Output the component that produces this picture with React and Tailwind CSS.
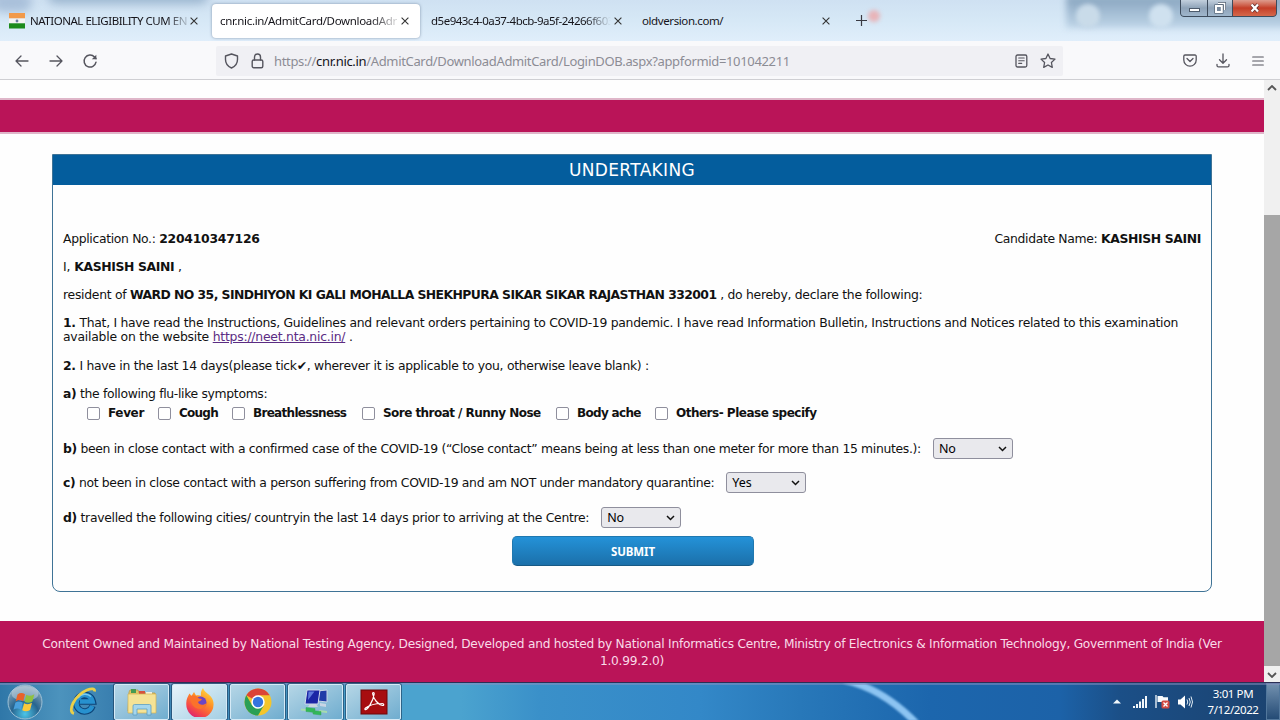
import React from "react";

function CloseX() {
  return (
    <svg width="8" height="8" viewBox="0 0 8 8" className="shrink-0">
      <path d="M.6.6l6.8 6.8M7.4.6L.6 7.4" stroke="#333" strokeWidth="1.1" />
    </svg>
  );
}

function Tab({ children, className = "", textClass = "" }) {
  return (
    <div className={"flex h-[34px] shrink-0 items-center " + className}>
      <div className={"whitespace-nowrap text-[11.5px] leading-[18px] text-[#15141a] " + textClass}>{children}</div>
      <div className="grow" />
      <CloseX />
    </div>
  );
}

function TitleBar() {
  return (
    <div className="relative flex h-[41px] shrink-0 items-center overflow-hidden bg-linear-to-b from-[#cfe1f2] via-[#d6e8f6] to-[#e0eefb]">
      <div className="absolute -top-1 -right-2 h-[32px] w-[222px] bg-linear-to-b from-[#86a2bd] via-[#a3bdd4] to-[#bfd5e8] blur-[3px]" />
      <div className="absolute top-[4px] left-[1076px] h-6 w-6 rounded-full bg-[#c9dbe9] blur-[2px]" />
      <div className="absolute top-[4px] left-[1149px] h-6 w-6 rounded-full bg-[#cfe1ef] blur-[2px]" />
      <div className="absolute top-[10px] left-[868px] h-3 w-3 rounded-full bg-[#e8b4b8] blur-[2px]" />
      <div className="absolute -top-2 -left-2 h-5 w-10 rounded-full bg-[#a9c0da] blur-[5px]" />
      <div className="absolute -top-3 left-12 h-4 w-[160px] rounded-full bg-[#9db7d0] blur-[5px]" />
      <div className="relative flex grow items-center">
        <div className="flex h-[34px] w-[212px] shrink-0 items-center pl-[9px]">
          <svg width="16" height="16" viewBox="0 0 16 16" className="shrink-0">
            <rect width="16" height="5.5" fill="#f29a4a" />
            <rect y="5.5" width="16" height="5" fill="#f4f4f4" />
            <rect y="10.3" width="16" height="5.2" fill="#1c8b1c" />
            <circle cx="8" cy="8" r="1.4" fill="#6b7ba0" />
          </svg>
          <Tab className="ml-[5px] w-[168px]" textClass="tracking-[-0.47px] [mask-image:linear-gradient(to_right,black_136px,transparent_162px)]">
            NATIONAL ELIGIBILITY CUM EN
          </Tab>
        </div>
        <Tab className="w-[208px] rounded-[4px] bg-white pr-[11px] pl-[8px] shadow-[0_0_3px_rgba(60,80,110,0.55)]" textClass="tracking-[-0.33px] [mask-image:linear-gradient(to_right,black_150px,transparent_182px)]">
          cnr.nic.in/AdmitCard/DownloadAdr
        </Tab>
        <Tab className="w-[211px] pr-[11px] pl-[11px]" textClass="tracking-[-0.5px] [mask-image:linear-gradient(to_right,black_155px,transparent_180px)]">
          d5e943c4-0a37-4bcb-9a5f-24266f603
        </Tab>
        <Tab className="w-[211px] pr-[12px] pl-[11px]" textClass="tracking-[-0.4px]">oldversion.com/</Tab>
        <svg width="11" height="11" viewBox="0 0 11 11" className="ml-[14px]">
          <path d="M5.5 0v11M0 5.5h11" stroke="#3a3a42" strokeWidth="1.2" />
        </svg>
      </div>
      <div className="absolute -top-px right-[3px] flex h-[18px] w-[97px] overflow-hidden rounded-b-[4px] border border-[#3d4b5c] bg-[#3d4b5c]">
        <div className="flex w-[26px] items-center justify-center bg-linear-to-b from-[#c3d0dd] via-[#8fa3b8] to-[#9fb6cc]">
          <div className="mt-[3px] h-[4px] w-[11px] border border-[#4d5b6c] bg-white" />
        </div>
        <div className="ml-px flex w-[24px] items-center justify-center bg-linear-to-b from-[#c3d0dd] via-[#8fa3b8] to-[#9fb6cc]">
          <svg width="12" height="12" viewBox="0 0 12 12">
            <path d="M4 1.500h6.500V8" fill="none" stroke="#4d5b6c" strokeWidth="2.800" />
            <path d="M4 1.500h6.500V8" fill="none" stroke="#fff" strokeWidth="1.500" />
            <rect x="2" y="4" width="5.800" height="6" fill="#76889c" stroke="#4d5b6c" strokeWidth="3.200" />
            <rect x="2" y="4" width="5.800" height="6" fill="#76889c" stroke="#fff" strokeWidth="2" />
          </svg>
        </div>
        <div className="ml-px flex grow items-center justify-center bg-linear-to-b from-[#dd9b8d] via-[#c43d27] to-[#d5674a]">
          <svg width="12" height="10" viewBox="0 0 12 10">
            <path d="M2.500 1.500l6.500 7M9 1.500l-6.500 7" stroke="#5b2b2b" strokeWidth="3.600" />
            <path d="M2.500 1.500l6.500 7M9 1.500l-6.500 7" stroke="#fff" strokeWidth="2.300" />
          </svg>
        </div>
      </div>
    </div>
  );
}

function Toolbar() {
  const s = { fill: "none", stroke: "#55555e", strokeWidth: 1.3, strokeLinecap: "round", strokeLinejoin: "round" };
  return (
    <div className="flex h-[39px] shrink-0 items-center border-b border-[#cfcfd3] bg-[#f9f9fb] pt-px pr-[16px] pl-[15px]">
      <svg width="14" height="12" viewBox="0 0 14 12" {...s}><path d="M13 6H1M6 1L1 6l5 5" /></svg>
      <svg className="ml-[20px]" width="14" height="12" viewBox="0 0 14 12" {...s}><path d="M1 6h12M8 1l5 5-5 5" /></svg>
      <svg className="ml-[19px]" width="16" height="16" viewBox="0 0 16 16" {...s} strokeWidth="1.500">
        <path d="M14 9.200A6 6 0 1 1 12.500 4L14 5.600" />
        <path d="M14.300 1.800v4.500H9.800z" fill="#55555e" stroke="none" />
      </svg>
      <div className="ml-[118px] flex h-[30px] w-[847px] items-center rounded-[2px] bg-[#f0f0f4] pl-[8px]">
        <svg width="15" height="16" viewBox="0 0 15 16" {...s} strokeWidth="1.400">
          <path d="M7.500 1L13.500 3v3.500c0 4-2.500 7-6 8.500-3.500-1.500-6-4.500-6-8.500V3z" />
        </svg>
        <svg className="ml-[12px]" width="13" height="16" viewBox="0 0 13 16" {...s} strokeWidth="1.400">
          <rect x="1.200" y="7" width="10.600" height="7.800" rx="1.500" />
          <path d="M3.500 7V4a3 3 0 0 1 6 0v3" />
        </svg>
        <div className="mt-[2px] ml-[10px] text-[13px] tracking-[-0.34px] whitespace-nowrap text-[#8c8c94]">
          https://<span className="text-[#15141a]">cnr.nic.in</span>/AdmitCard/DownloadAdmitCard/LoginDOB.aspx?appformid=101042211
        </div>
        <div className="grow" />
        <svg width="13" height="14" viewBox="0 0 13 14" {...s}>
          <rect x="1" y="1" width="10.800" height="12" rx="1.500" />
          <path d="M3.700 4h5.500M3.700 6.700h5.500M3.700 9.400h3" strokeWidth="1.100" />
        </svg>
        <svg className="mr-[7px] ml-[12px]" width="16" height="16" viewBox="0 0 16 16" {...s}>
          <path d="M8 1l2.100 4.500 4.900.600-3.600 3.400.900 4.900L8 12l-4.300 2.400.900-4.900L1 6.100l4.900-.600z" />
        </svg>
      </div>
      <div className="grow" />
      <svg width="14" height="13" viewBox="0 0 14 13" {...s}>
        <path d="M2 1h10a1.200 1.200 0 0 1 1.200 1.200V6a6.200 6.200 0 0 1-12.400 0V2.200A1.200 1.200 0 0 1 2 1zM4 4.500l3 3 3-3" />
      </svg>
      <svg className="ml-[19px]" width="14" height="15" viewBox="0 0 14 15" {...s}>
        <path d="M7 1v9M3.500 6.800L7 10.200l3.500-3.400M1 11.500v.900a1.500 1.500 0 0 0 1.500 1.500h9a1.500 1.500 0 0 0 1.500-1.500v-.900" />
      </svg>
      <svg className="ml-[22px]" width="12" height="10" viewBox="0 0 12 10" {...s} strokeWidth="1.200"><path d="M.7 1h10.600M.7 5h10.600M.7 9h10.600" /></svg>
    </div>
  );
}

const symptoms = [
  ["Fever", "w-[36px] tracking-[-0.35px]", "mr-[14px]"],
  ["Cough", "w-[38px] tracking-[-0.75px]", "mr-[15px]"],
  ["Breathlessness", "w-[94px] tracking-[-0.7px]", "mr-[15px]"],
  ["Sore throat / Runny Nose", "w-[158px] tracking-[-0.54px]", "mr-[15px]"],
  ["Body ache", "w-[64px] tracking-[-0.68px]", "mr-[14px]"],
  ["Others- Please specify", "w-[142px] tracking-[-0.5px]", ""],
];

function Choice({ value }) {
  return (
    <div className="flex h-[21px] w-[80px] shrink-0 items-center rounded-[3px] border border-[#8f8f9d] bg-[#e9e9ed] pr-[5px] pl-[5px] text-[12.5px] tracking-[-0.1px] text-black">
      <span className="grow font-['Noto_Sans',sans-serif]">{value}</span>
      <svg width="9" height="6" viewBox="0 0 9 6"><path d="M1 1l3.500 3.500L8 1" fill="none" stroke="#111" strokeWidth="1.500" /></svg>
    </div>
  );
}

function Card() {
  return (
    <main className="mx-[52px] mt-[20px] flex h-[438px] flex-col rounded-b-[8px] border border-[#3f7396] text-[12.4px] leading-[14px] tracking-[-0.335px] whitespace-nowrap text-[#111]">
      <h1 className="h-[30px] shrink-0 bg-[#045d9d] text-center text-[17px] leading-[31px] tracking-[0.35px] text-white">UNDERTAKING</h1>
      <div className="flex grow flex-col px-[10px] pt-[47px]">
        <div className="flex justify-between">
          <p>Application No.: <b className="tracking-[-0.25px]">220410347126</b></p>
          <p>Candidate Name: <b className="tracking-[-0.37px]">KASHISH SAINI</b></p>
        </div>
        <p className="mt-[14px] tracking-[-0.1px]">I, <b className="tracking-[-0.37px]">KASHISH SAINI</b> ,</p>
        <p className="mt-[14px] tracking-[-0.28px]">resident of <b className="tracking-[-0.565px]">WARD NO 35, SINDHIYON KI GALI MOHALLA SHEKHPURA SIKAR SIKAR RAJASTHAN 332001</b> , do hereby, declare the following:</p>
        <p className="mt-[14px] tracking-[-0.288px]"><b>1.</b> That, I have read the Instructions, Guidelines and relevant orders pertaining to COVID-19 pandemic. I have read Information Bulletin, Instructions and Notices related to this examination</p>
        <p className="tracking-[-0.23px]">available on the website <span className="text-[#5b2c83] underline">https://neet.nta.nic.in/</span> .</p>
        <p className="mt-[15px] tracking-[-0.29px]"><b>2.</b> I have in the last 14 days(please tick✔, wherever it is applicable to you, otherwise leave blank) :</p>
        <p className="mt-[14px]"><b>a)</b> the following flu-like symptoms:</p>
        <div className="mt-[4px] flex h-[16px] items-center pl-[24px] text-[12px]">
          {symptoms.map(([label, w, gap]) => (
            <div key={label} className={"flex items-center " + gap}>
              <div className="h-[13px] w-[13px] rounded-[2px] border-[1.5px] border-[#8f8f9d] bg-white" />
              <b className={"ml-[8px] " + w}>{label}</b>
            </div>
          ))}
        </div>
        <div className="mt-[17px] flex h-[21px] items-center gap-[12px]"><p><b>b)</b> been in close contact with a confirmed case of the COVID-19 (“Close contact” means being at less than one meter for more than 15 minutes.):</p><Choice value="No" /></div>
        <div className="mt-[13px] flex h-[21px] items-center gap-[12px]"><p><b>c)</b> not been in close contact with a person suffering from COVID-19 and am NOT under mandatory quarantine:</p><Choice value="Yes" /></div>
        <div className="mt-[14px] flex h-[21px] items-center gap-[12px]"><p className="tracking-[-0.308px]"><b>d)</b> travelled the following cities/ countryin the last 14 days prior to arriving at the Centre:</p><Choice value="No" /></div>
        <div className="mt-[8px] ml-[449px] flex h-[30px] w-[242px] items-center justify-center rounded-[5px] border border-[#1f78b0] border-b-[#185a85] bg-linear-to-b from-[#2492d8] to-[#1b70aa] pt-px font-['Noto_Sans',sans-serif] text-[11.5px] font-bold tracking-[-0.1px] text-white">SUBMIT</div>
      </div>
    </main>
  );
}

function TaskButton({ active, children }) {
  return (
    <div className={"mr-[3px] flex h-[36px] w-[55px] shrink-0 items-center justify-center rounded-[2px] border border-[#d5eaf6] shadow-[0_0_0_1px_rgba(20,50,80,0.55)] " + (active ? "bg-linear-to-br from-[#e6f3fa] to-[#a4cfe4]" : "bg-linear-to-br from-[#b5d6e6] to-[#6fadcf]")}>
      {children}
    </div>
  );
}

function Taskbar() {
  return (
    <footer className="relative flex h-[38px] shrink-0 items-center overflow-hidden border-t border-[#2b2f55] bg-[linear-gradient(to_right,#2f77a8_0,#4c93bd_60px,#3a80b0_110px,#4ba3cf_400px,#4ba3cf_460px,#3a90c9_540px,#3388c8_700px,#2878b9_800px,#1c66ad_930px,#1c62a8_1060px,#1b4f87_1120px,#1b426f_1280px)] font-['Noto_Sans',sans-serif]">
      <svg width="110" height="38" viewBox="0 0 110 38" className="absolute top-0 left-[830px] blur-[1px]">
        <path d="M14 -3Q54 6 88 42" fill="none" stroke="#8cc4f2" strokeWidth="7" />
      </svg>
      <div className="absolute top-0 left-0 h-[2px] w-full bg-[#8b8fc0]/50" />
      <svg width="36" height="36" viewBox="0 0 36 36" className="relative ml-[7px] shrink-0">
        <defs>
          <radialGradient id="orb" cx=".5" cy=".85" r=".8"><stop offset="0" stopColor="#4cc5e8" /><stop offset=".5" stopColor="#27648f" /><stop offset="1" stopColor="#88a9bd" /></radialGradient>
        </defs>
        <circle cx="18" cy="18" r="17" fill="url(#orb)" stroke="#9cc0d6" strokeWidth="1" />
        <ellipse cx="18" cy="9.500" rx="13.500" ry="7.500" fill="#d5e2ea" opacity=".45" />
        <path d="M10.500 10.500c2.500-2 5-1.700 7.500-.300l-1.800 7c-2.500-1.400-5-1.500-7.500 0z" fill="#e8622a" />
        <path d="M19.300 10.800c2.500 1.500 5.300 1.200 8-.600l-1.900 7.200c-2.700 1.600-5.300 1.800-7.900.300z" fill="#8fc23f" />
        <path d="M8.300 18.700c2.500-1.500 5-1.400 7.500 0l-1.800 7c-2.500-1.400-5-1.500-7.500 0z" fill="#49a0dc" />
        <path d="M17.100 19.200c2.500 1.500 5.200 1.300 7.900-.400l-1.900 7.200c-2.700 1.700-5.300 1.700-7.900.300z" fill="#fbc93a" />
      </svg>
      <svg width="32" height="32" viewBox="0 0 32 32" className="relative ml-[25px] shrink-0">
        <path d="M24.500 20A8.300 8.300 0 1 1 24.800 15.500H12" fill="none" stroke="#0d4478" strokeWidth="6.500" />
        <path d="M24.300 20A8.200 8.200 0 1 1 24.600 15.500H12" fill="none" stroke="#2791cf" strokeWidth="4.500" />
        <path d="M10 12a8.500 8.500 0 0 1 13-1.500" fill="none" stroke="#7ccbee" strokeWidth="1.500" />
        <path d="M6 27.500C-1 26 6 9.500 19 4c5-2 8-1.500 7.500 1.500" fill="none" stroke="#e9cf4a" strokeWidth="2.800" />
      </svg>
      <div className="relative ml-[14px] flex">
        <TaskButton>
          <svg width="32" height="30" viewBox="0 0 32 30">
            <path d="M3 5l1-2h8l1 3h16v18H2z" fill="#e5c665" stroke="#b9973f" strokeWidth=".7" />
            <path d="M5 2h5v4H5z" fill="#469b52" /><path d="M13 4h6v4h-6z" fill="#d6523d" /><path d="M20 5h6v4h-6z" fill="#f5f1dd" />
            <path d="M2 7h28v19H2z" fill="#f5e396" stroke="#d2b154" strokeWidth=".7" />
            <path d="M7 28V19q0-1.500 1.500-1.500h15Q25 17.500 25 19v9h-4v-6H11v6z" fill="#a5d6ed" stroke="#5c9ec3" strokeWidth=".8" />
          </svg>
        </TaskButton>
        <TaskButton active>
          <svg width="30" height="30" viewBox="0 0 30 30">
            <defs><linearGradient id="fox" x1=".8" y1="0" x2=".2" y2="1"><stop offset="0" stopColor="#ffe146" /><stop offset=".4" stopColor="#ff8f25" /><stop offset=".75" stopColor="#f54748" /><stop offset="1" stopColor="#d51c7b" /></linearGradient></defs>
            <path d="M18 1c1 3 3 4 5 6 3 2 6 6 5.500 11A13.600 13.600 0 0 1 1.300 17C1 12.500 3 9 4.500 6.500L6.500 9l2.500-4 2 3.500c2-.500 3.500-.500 5 .200-.500-3 .500-6 2-7.700z" fill="url(#fox)" />
            <circle cx="15.500" cy="15.500" r="6" fill="#6c45c4" />
            <path d="M5 9c4-1.500 7 0 9 2.500l3 .500c-1 2-3 2-4 3 1 3.500 6 3.500 8.500 1 0 3.500-3 6-6.500 6C9 22 5.500 17 5 9z" fill="#fb722b" />
          </svg>
        </TaskButton>
        <TaskButton>
          <svg width="28" height="28" viewBox="0 0 28 28">
            <circle cx="14" cy="14" r="13.500" fill="#f4c52b" />
            <path d="M14 14L2.300 7.300A13.500 13.500 0 0 1 25.700 7.300H14z" fill="#db4437" />
            <path d="M2.300 7.300A13.500 13.500 0 0 0 14 27.500l5.800-10.100L14 14l-5.800 3.400z" fill="#2a9f55" />
            <circle cx="14" cy="14" r="6.700" fill="#fff" /><circle cx="14" cy="14" r="5.200" fill="#3474de" />
          </svg>
        </TaskButton>
        <TaskButton>
          <svg width="30" height="30" viewBox="0 0 30 30">
            <path d="M16 4l10-1v12l-9-1z" fill="#203ba8" stroke="#c9d5e5" />
            <path d="M19 16l6 1v3l-6-1z" fill="#c9d5e5" />
            <path d="M6 3h13l-2 14H4z" fill="#1b25a5" stroke="#d2dcec" />
            <path d="M7.500 4.500h6L7 13z" fill="#5f79dc" />
            <path d="M9 17h6l2 3H7z" fill="#cbd5df" />
            <path d="M0 21.500l9 1v2l-9-1zM18 23l8 1v2l-8-1z" fill="#a7dcae" />
            <path d="M5 20.500l9 1v4l-9-1zM12 23.500l8 1v3.500l-8-1z" fill="#31b857" stroke="#38a75a" strokeWidth=".5" />
          </svg>
        </TaskButton>
        <TaskButton>
          <svg width="28" height="26" viewBox="0 0 28 26">
            <rect x="1" y="1" width="26" height="24" fill="#a70d10" stroke="#6d0709" />
            <path d="M5 20.500c2 1.500 8-8 9.200-15.500.200-2-2-2-1.500 0 1 5 5 10.500 9.800 11.500 2 .2 1.500-2.200-1-2C16 14.500 9 16.500 5.500 19q-1 .8-.5 1.500z" fill="none" stroke="#fff" strokeWidth="1.200" />
          </svg>
        </TaskButton>
      </div>
      <div className="grow" />
      <svg width="8" height="5" viewBox="0 0 8 5" className="shrink-0"><path d="M0 4.500L4 .5l4 4z" fill="#f2f8fc" /></svg>
      <svg width="14" height="12" viewBox="0 0 14 12" className="ml-[12px] shrink-0" fill="#f1f6fa"><path d="M0 10h2v2H0zM3 8h2v4H3zM6 5.500h2V12H6zM9 3h2v9H9zM12 0h2v12h-2z" /></svg>
      <svg width="15" height="15" viewBox="0 0 15 15" className="ml-[8px] shrink-0">
        <path d="M1 1v13" stroke="#e4eef5" strokeWidth="1.400" /><path d="M2.500 2h5l1 1.200H13V9H8L7 8H2.500z" fill="#f8fbfd" />
        <rect x="6.500" y="6.500" width="8" height="8" rx="1.500" fill="#d24a42" /><path d="M8.500 8.500l4 4M12.500 8.500l-4 4" stroke="#fff" strokeWidth="1.300" />
      </svg>
      <svg width="15" height="14" viewBox="0 0 15 14" className="ml-[8px] shrink-0">
        <path d="M0 4.500h2.500L7 .500v13L2.500 9.500H0z" fill="#fff" /><path d="M9 4.500q1.500 2.500 0 5M11 3q2.500 4 0 8M13 1.500q3 5.500 0 11" fill="none" stroke="#e4eef5" />
      </svg>
      <div className="ml-[14px] w-[52px] shrink-0 text-center text-[11.500px] leading-[16px] tracking-[-0.4px] whitespace-nowrap text-white">
        <div>3:01 PM</div><div className="-mx-1">7/12/2022</div>
      </div>
      <div className="ml-[7px] h-[37px] w-[14px] shrink-0 border border-[#52779c] bg-linear-to-b from-[#7291af] to-[#244b75]" />
    </footer>
  );
}

export default function App() {
  return (
    <div className="flex h-[720px] w-[1280px] flex-col overflow-hidden bg-white font-['Noto_Sans',sans-serif]">
      <TitleBar />
      <Toolbar />
      <div className="flex h-[602px] shrink-0">
        <div className="flex w-[1264px] shrink-0 flex-col bg-[#fefefe] font-['DejaVu_Sans',sans-serif]">
          <div className="mt-[18px] h-[36px] shrink-0 border-y-2 border-[#dfb6c9] bg-[#ba1458]" />
          <Card />
          <div className="mt-[29px] h-[61px] bg-[#ba1458] pt-[15px] text-center text-[12.200px] leading-[17px] tracking-[-0.245px] text-[#f9dce8]">
            <div className="whitespace-nowrap">Content Owned and Maintained by National Testing Agency, Designed, Developed and hosted by National Informatics Centre, Ministry of Electronics &amp; Information Technology, Government of India (Ver</div>
            <div>1.0.99.2.0)</div>
          </div>
        </div>
        <div className="flex w-[16px] flex-col items-center bg-[#f0f0f0]">
          <svg width="10" height="6" viewBox="0 0 10 6" className="mt-[5px] shrink-0"><path d="M1 5l4-4 4 4" fill="none" stroke="#555" strokeWidth="1.800" /></svg>
          <div className="mt-[124px] h-[451px] w-full shrink-0 bg-[#a6a6a6]" />
          <svg width="10" height="6" viewBox="0 0 10 6" className="mt-[6px] shrink-0"><path d="M1 1l4 4 4-4" fill="none" stroke="#555" strokeWidth="1.800" /></svg>
        </div>
      </div>
      <Taskbar />
    </div>
  );
}
